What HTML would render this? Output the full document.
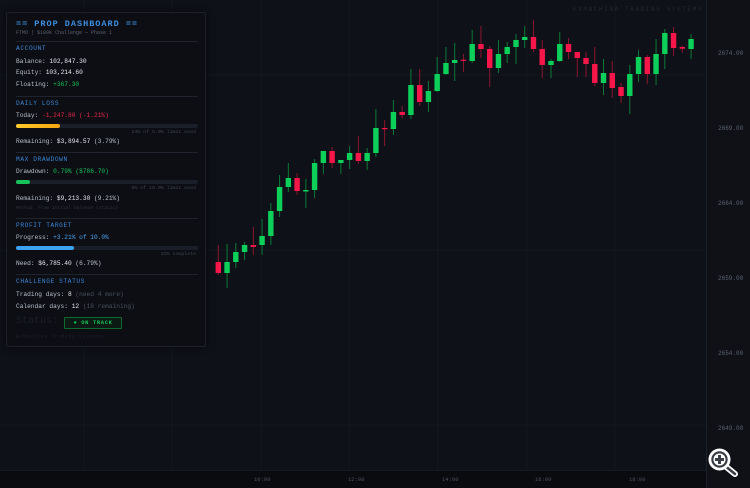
<!DOCTYPE html>
<html><head><meta charset="utf-8"><style>
*{margin:0;padding:0;box-sizing:border-box}
body{width:750px;height:488px;background:#0f1118;overflow:hidden;position:relative;font-family:"Liberation Mono",monospace;color:#c9ced8}
#chart{position:absolute;left:0;top:0}
.axisr{position:absolute;left:706px;top:0;width:44px;height:488px;background:#0f1117;border-left:1px solid #1b1f29}
.axisb{position:absolute;left:0;top:470px;width:706px;height:18px;background:#0a0b0f;border-top:1px solid #161922}
.pl{position:absolute;left:718px;font-size:6px;color:#5c6270}
.tl{position:absolute;top:476px;font-size:5.5px;color:#4b5160}
.wm{position:absolute;left:573px;top:6px;font-size:6px;letter-spacing:1.6px;color:#242833}
.panel{position:absolute;left:6px;top:12px;width:200px;height:335px;background:#0c0e14;border:1px solid #1d212b;border-radius:2px;box-shadow:0 0 8px rgba(0,0,0,.6)}
.a{position:absolute;white-space:nowrap}
.t{left:9px;top:6px;font-size:8.5px;font-weight:bold;color:#3d8fe0;letter-spacing:1px}
.sub{left:9px;top:17px;font-size:5px;color:#5a606c}
.hr{position:absolute;left:9px;width:182px;height:1px;background:#1f232d}
.h{left:9px;font-size:6.2px;color:#3b86d4;letter-spacing:.6px}
.r{left:9px;font-size:6.2px;color:#b9bfca}
.r b{font-weight:normal;color:#e6e9ef}
.s{right:9px;font-size:4.9px;color:#3f4450}
.bar{position:absolute;left:9px;width:182px;height:4px;background:#1a1e28;border-radius:2px}
.bar i{position:absolute;left:0;top:0;height:4px;border-radius:2px}
.g{color:#16c35a}.rd{color:#e8284a}.bl{color:#4aa4f0}.dim{color:#4a505c}
</style></head><body>
<svg id="chart" width="750" height="488"></svg>
<div class="wm">EXMACHINA TRADING SYSTEMS</div>
<div class="axisr"></div>
<div class="axisb"></div>
<div class="pl" style="top:50px">2674.00</div>
<div class="pl" style="top:125px">2669.00</div>
<div class="pl" style="top:200px">2664.00</div>
<div class="pl" style="top:275px">2659.00</div>
<div class="pl" style="top:350px">2654.00</div>
<div class="pl" style="top:425px">2649.00</div>
<div class="tl" style="left:254px">10:00</div>
<div class="tl" style="left:348px">12:00</div>
<div class="tl" style="left:442px">14:00</div>
<div class="tl" style="left:535px">16:00</div>
<div class="tl" style="left:629px">18:00</div>
<svg style="position:absolute;left:704px;top:443px" width="40" height="36">
<line x1="20" y1="22" x2="31" y2="31" stroke="#fff" stroke-width="6" stroke-linecap="round"/>
<line x1="20" y1="22" x2="31" y2="31" stroke="#3a3d45" stroke-width="2.5" stroke-linecap="round"/>
<circle cx="15.5" cy="16.5" r="11" fill="#fff"/>
<circle cx="15.5" cy="16.5" r="8.2" fill="#3a3d45"/>
<circle cx="15.5" cy="16.5" r="6" fill="#fff"/>
<rect x="14" y="12" width="3" height="9" fill="#3a3d45"/>
<rect x="11" y="15" width="9" height="3" fill="#3a3d45"/>
</svg>
<div class="panel">
<div class="a t">== PROP DASHBOARD ==</div>
<div class="a sub">FTMO | $100K Challenge — Phase 1</div>
<div class="hr" style="top:28px"></div>
<div class="a h" style="top:32px">ACCOUNT</div>
<div class="a r" style="top:45px">Balance: <b>102,847.30</b></div>
<div class="a r" style="top:56px">Equity: <b>103,214.60</b></div>
<div class="a r" style="top:68px">Floating: <span class="g">+367.30</span></div>
<div class="hr" style="top:83px"></div>
<div class="a h" style="top:87px">DAILY LOSS</div>
<div class="a r" style="top:99px">Today: <span class="rd">-1,247.80 (-1.21%)</span></div>
<div class="bar" style="top:111px"><i style="width:44px;background:linear-gradient(90deg,#ffcb2a,#f5a40f)"></i></div>
<div class="a s" style="top:117px">24% of 5.0% limit used</div>
<div class="a r" style="top:125px">Remaining: <b>$3,894.57</b> (3.79%)</div>
<div class="hr" style="top:139px"></div>
<div class="a h" style="top:143px">MAX DRAWDOWN</div>
<div class="a r" style="top:155px">Drawdown: <span class="g">0.79% ($786.70)</span></div>
<div class="bar" style="top:167px"><i style="width:14px;background:#16c35a"></i></div>
<div class="a s" style="top:173px">8% of 10.0% limit used</div>
<div class="a r" style="top:182px">Remaining: <b>$9,213.30</b> (9.21%)</div>
<div class="a" style="left:9px;top:193px;font-size:4.6px;color:#30343e">Method: From initial balance (static)</div>
<div class="hr" style="top:205px"></div>
<div class="a h" style="top:209px">PROFIT TARGET</div>
<div class="a r" style="top:221px">Progress: <span class="bl">+3.21% of 10.0%</span></div>
<div class="bar" style="top:233px"><i style="width:58px;background:#3ea2f2"></i></div>
<div class="a s" style="top:239px">32% complete</div>
<div class="a r" style="top:247px">Need: <b>$6,785.40</b> (6.79%)</div>
<div class="hr" style="top:261px"></div>
<div class="a h" style="top:265px">CHALLENGE STATUS</div>
<div class="a r" style="top:278px">Trading days: <b>8</b> <span class="dim">(need 4 more)</span></div>
<div class="a r" style="top:290px">Calendar days: <b>12</b> <span class="dim">(18 remaining)</span></div>
<div class="a" style="left:9px;top:303px;font-size:10px;color:#1b1f28">Status:</div>
<div class="a" style="left:57px;top:304px;width:58px;height:12px;border:1px solid #0f6a30;background:#0b1a12;border-radius:1px;font-size:5.5px;font-weight:bold;color:#17c45b;text-align:center;line-height:10px;letter-spacing:.6px">● ON TRACK</div>
<div class="a" style="left:9px;top:321px;font-size:5px;color:#1d212a;letter-spacing:.5px">ExMachina Trading Systems</div>
</div>
<script>
var d=[[262,273,245,275,0],[262,273,244,288,1],[252,262,243,268,1],[245,252,242,260,1],[245,247,227,255,0],[236,245,219,255,1],[211,236,203,245,1],[187,211,175,217,1],[178,187,163,192,1],[178,191,173,195,0],[190,191.5,179,208,1],[163,190,159,198,1],[151,163,151,174,1],[151,163,147,168,0],[160,163,160,174,1],[153,160,146,169,1],[153,161,136,164,0],[153,161,148,170,1],[128,153,109,157,1],[128,129.2,120,146,0],[112,129,100,135,1],[112,115,106,118,0],[85,115,69,119,1],[85,102,69,106,0],[91,102,81,112,1],[74,91,57,92,1],[63,74,47,75,1],[60,63,43,81,1],[59.7,60.9,54,72,0],[44,61,30,63,1],[44,49,26,58,0],[49,68,46,87,0],[54,68,40,73,1],[47,54,42,63,1],[40,47,34,64,1],[37,40,26,48,1],[37,49,20,52,0],[49,65,40,78,0],[61,65,59,78,1],[44,61,32,62,1],[44,52,38,59,0],[52,58,52,77,0],[58,64,52,77,0],[64,83,47,86,0],[73,83,59,95,1],[73,88,61,98,0],[87,96,83,103,0],[74,96,65,114,1],[57,74,50,82,1],[57,74,55,84,0],[54,74,39,85,1],[33,54,29,69,1],[33,48,27,56,0],[47,48.7,46,53,0],[39,49,34,59,1]];
var s='';
[75,250,425].forEach(function(y){s+='<line x1="0" y1="'+y+'" x2="706" y2="'+y+'" stroke="#14171e" stroke-width="1"/>';});
[84,172,261,349,438,527,615].forEach(function(x){s+='<line x1="'+x+'" y1="0" x2="'+x+'" y2="470" stroke="#14171e" stroke-width="1"/>';});
d.forEach(function(c,i){var x=218.3+i*8.755;var col=c[4]?'#0cd05a':'#f7164a',wc=c[4]?'#0a7a36':'#8a1530';
s+='<line x1="'+x+'" y1="'+c[2]+'" x2="'+x+'" y2="'+c[3]+'" stroke="'+wc+'" stroke-width="1"/>';
var h=Math.max(c[1]-c[0],1.2);s+='<rect x="'+(x-2.7)+'" y="'+c[0]+'" width="5.4" height="'+h+'" fill="'+col+'"/>';});
document.getElementById('chart').innerHTML=s;
</script>
</body></html>
